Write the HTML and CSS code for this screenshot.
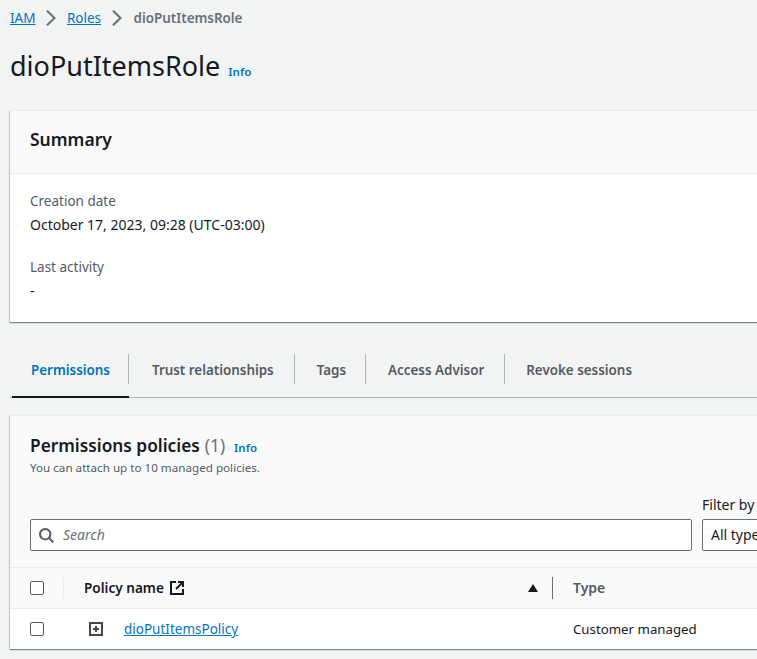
FILE: index.html
```html
<!DOCTYPE html>
<html lang="en">
<head>
<meta charset="utf-8">
<title>dioPutItemsRole</title>
<link rel="stylesheet" href="styles.css">
</head>
<body>
<div class="page">
  <nav class="crumbs">
    <a href="#" class="link">IAM</a>
    <svg class="chev" viewBox="0 0 16 16"><path d="M4 .7L11.5 8 4 15.3"/></svg>
    <a href="#" class="link">Roles</a>
    <svg class="chev chev-last" viewBox="0 0 16 16"><path d="M4 .7L11.5 8 4 15.3"/></svg>
    <span class="crumb-current">dioPutItemsRole</span>
  </nav>
  <header class="title-row">
    <h1 class="title">dioPutItemsRole</h1>
    <a href="#" class="info">Info</a>
  </header>

  <section class="card summary">
    <div class="summary-head"><h2 class="summary-title">Summary</h2></div>
    <div class="summary-body">
      <div class="kv">
        <div class="kv-label">Creation date</div>
        <div class="kv-value">October 17, 2023, 09:28 (UTC-03:00)</div>
      </div>
      <div class="kv">
        <div class="kv-label">Last activity</div>
        <div class="kv-value">-</div>
      </div>
    </div>
  </section>

  <div class="tabs">
    <div class="tab tab-active"><span>Permissions</span></div>
    <div class="tab tab-trust"><span>Trust relationships</span></div>
    <div class="tab tab-tags"><span>Tags</span></div>
    <div class="tab"><span>Access Advisor</span></div>
    <div class="tab tab-last"><span>Revoke sessions</span></div>
  </div>

  <section class="card policies">
    <div class="pol-head">
      <div class="pol-title-row">
        <h2 class="pol-title">Permissions policies</h2>
        <span class="pol-count">(1)</span>
        <a href="#" class="info">Info</a>
      </div>
      <p class="pol-desc">You can attach up to 10 managed policies.</p>
      <div class="filters">
        <div class="search">
          <svg class="search-icon" viewBox="0 0 15 15"><circle cx="6.2" cy="6.2" r="5.2"/><path d="M10 10l4.3 4.3"/></svg>
          <span class="placeholder">Search</span>
        </div>
        <div class="filter-by">
          <div class="filter-label">Filter by Type</div>
          <div class="select">All types</div>
        </div>
      </div>
    </div>
    <div class="row row-head">
      <div class="cell-check"><span class="checkbox"></span></div>
      <div class="cell-name">
        <span class="th">Policy name</span>
        <svg class="ext" viewBox="0 0 14 14"><path d="M6 1H1v12h12V8"/><path d="M8 1h5v5M13 1L6 8"/></svg>
        <svg class="sort" viewBox="0 0 10 8"><path d="M5 0l5 8H0z"/></svg>
      </div>
      <div class="cell-type th th-muted">Type</div>
    </div>
    <div class="row row-data">
      <div class="cell-check cell-check-plain"><span class="checkbox"></span></div>
      <div class="cell-name">
        <svg class="expand" viewBox="0 0 14 14"><rect x="1" y="1" width="12" height="12"/><path class="plus" d="M7 4v6M4 7h6"/></svg>
        <a href="#" class="link">dioPutItemsPolicy</a>
      </div>
      <div class="cell-type cell-type-value">Customer managed</div>
    </div>
  </section>
</div>
</body>
</html>
```
FILE: styles.css
```css
html, body {
  margin: 0;
  height: 100%;
  overflow: hidden;
  background: #f2f3f3;
}
body {
  font-family: "Noto Sans", sans-serif;
  font-size: 14px;
  line-height: 20px;
  color: #16191f;
}
.page {
  width: 1100px;
  padding: 8px 0 0 10px;
}
.link { color: #0073bb; text-decoration: underline; font-size: 13.5px; }
.crumbs {
  display: flex;
  align-items: center;
  height: 20px;
}
.chev {
  width: 16px;
  height: 16px;
  margin: 0 7.5px 0 8px;
  fill: none;
  stroke: #687078;
  stroke-width: 2;
}
.chev-last { margin-right: 8.5px; }
.crumb-current { color: #687078; font-weight: 600; font-size: 13.4px; }
.title-row {
  display: flex;
  align-items: baseline;
  gap: 8px;
  margin-top: 18px;
  height: 40px;
}
.title {
  margin: 0;
  font-size: 27px;
  line-height: 40px;
  font-weight: 400;
}
.info {
  color: #0073bb;
  font-size: 11.5px;
  font-weight: 600;
  text-decoration: none;
}
.card {
  background: #fff;
  box-shadow: 0 1px 1px 0 rgba(0,28,36,.3), 1px 1px 1px 0 rgba(0,28,36,.15), -1px 1px 1px 0 rgba(0,28,36,.15);
  border-top: 1px solid #eaeded;
}
.summary { margin-top: 24px; }
.summary-head {
  background: #fafafa;
  height: 56px;
  display: flex;
  align-items: center;
  padding: 0 0 6px 20px;
  border-bottom: 1px solid #eaeded;
}
.summary-title { margin: 0; font-size: 17.5px; font-weight: 600; }
.summary-body {
  padding: 17px 20px 8px;
  height: 123px;
  display: flex;
  flex-direction: column;
  gap: 22px;
}
.kv-label { color: #545b64; line-height: 20px; font-size: 13.5px; }
.kv-value { margin-top: 4px; line-height: 20px; }
.tabs {
  display: flex;
  margin: 32px 0 17px 0;
  height: 43px;
  padding-left: 2px;
  border-bottom: 1px solid #aab7b8;
  font-weight: 600;
  color: #545b64;
  font-size: 13.4px;
}
.tab { display: flex; align-items: flex-start; }
.tab span {
  display: block;
  height: 30px;
  line-height: 32px;
  padding: 0 20px 0 22px;
  border-right: 1px solid #aab7b8;
}
.tab-trust span { padding-left: 23px; }
.tab-tags span { padding-right: 19px; }
.tab-last span { border-right: 0; padding-left: 21px; }
.tab-active {
  color: #0073bb;
  box-shadow: inset 0 -2px 0 #16191f;
  height: 44px;
}
.tab-active span { padding: 0 18px 0 19px; }
.pol-head { background: #fafafa; padding: 20px 20px 0; }
.pol-title-row { display: flex; align-items: baseline; height: 23px; }
.pol-title { margin: 0; font-size: 17.3px; font-weight: 600; }
.pol-count { font-size: 17.3px; color: #687078; margin-left: 5px; }
.pol-title-row .info { margin-left: 9px; }
.pol-desc { margin: 0; font-size: 11.65px; line-height: 18px; color: #545b64; }
.filters {
  display: flex;
  gap: 10px;
  align-items: flex-end;
  margin-top: 18px;
  padding-bottom: 16px;
}
.search {
  width: 662px;
  height: 32px;
  box-sizing: border-box;
  background: #fff;
  border: 1px solid #687078;
  border-radius: 2px;
  display: flex;
  align-items: center;
  padding-left: 8px;
  gap: 9px;
}
.search-icon { width: 15px; height: 15px; fill: none; stroke: #545b64; stroke-width: 2; }
.placeholder { font-style: italic; color: #687078; font-size: 14px; }
.filter-by { width: 300px; }
.filter-label { line-height: 20px; margin-bottom: 4px; }
.select {
  height: 32px;
  box-sizing: border-box;
  background: #fff;
  border: 1px solid #687078;
  border-radius: 2px;
  padding-left: 8px;
  line-height: 30px;
}
.row { display: flex; align-items: center; border-top: 1px solid #eaeded; }
.row-head { height: 40px; background: #fafafa; font-weight: 600; }
.row-data { height: 40px; }
.cell-check {
  width: 54px;
  box-sizing: border-box;
  padding-left: 20px;
  height: 22px;
  display: flex;
  align-items: center;
  border-right: 1px solid #eaeded;
}
.cell-check-plain { border-right: 0; }
.checkbox {
  width: 12px;
  height: 12px;
  background: #fff;
  border: 1px solid #545b64;
  border-radius: 2px;
}
.cell-name {
  width: 489px;
  box-sizing: border-box;
  padding-left: 20px;
  height: 22px;
  display: flex;
  align-items: center;
  border-right: 1px solid #687078;
}
.th { font-size: 13.6px; }
.row-data .cell-name { border-right: 0; padding-left: 25px; }
.ext { width: 14px; height: 14px; margin-left: 6px; fill: none; stroke: #16191f; stroke-width: 2; }
.sort { width: 10px; height: 8px; margin-left: auto; margin-right: 14px; fill: #16191f; }
.expand { width: 14px; height: 14px; fill: none; stroke: #414750; stroke-width: 2; margin-right: 21px; }
.cell-type { padding-left: 20px; }
.cell-type-value { font-size: 13.25px; }
.th-muted { color: #545b64; font-size: 14px; }
```
